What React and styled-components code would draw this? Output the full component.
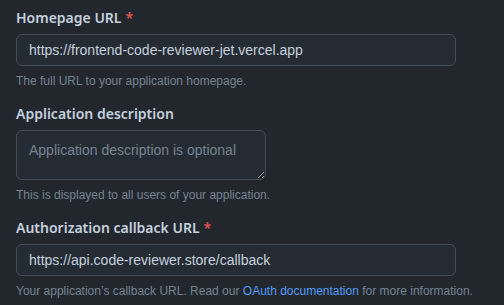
import React from 'react';
import styled, { createGlobalStyle } from 'styled-components';

const GlobalStyle = createGlobalStyle`
  html, body {
    margin: 0;
    padding: 0;
    background: #22272e;
  }
  body {
    font-family: "Liberation Sans", "Noto Sans", sans-serif;
    color: #adbac7;
  }
`;

const Page = styled.div`
  width: 504px;
  height: 305px;
  overflow: hidden;
  padding: 8px 16px 0;
  box-sizing: border-box;
  display: flex;
  flex-direction: column;
  gap: 14px;
`;

const Field = styled.div`
  display: flex;
  flex-direction: column;
`;

const Label = styled.label`
  font-family: "Noto Sans", sans-serif;
  font-size: 14px;
  font-weight: 600;
  line-height: 20px;
  color: #c5d1de;
  margin-bottom: 6px;
`;

const Required = styled.span`
  color: #e5534b;
  margin-left: 4px;
`;

const TextInput = styled.input`
  box-sizing: border-box;
  width: ${(p) => p.$width}px;
  height: 32px;
  padding: 5px 12px;
  font-family: inherit;
  font-size: 14px;
  line-height: 20px;
  color: #c5d1de;
  background: #252b33;
  border: 1px solid #444c56;
  border-radius: 6px;
  outline: none;
`;

const TextArea = styled.textarea`
  box-sizing: border-box;
  width: 250px;
  height: 50px;
  padding: 9px 12px 5px;
  font-family: inherit;
  font-size: 14px;
  line-height: 20px;
  color: #c5d1de;
  background: #252b33;
  border: 1px solid #444c56;
  border-radius: 6px;
  outline: none;
  &::placeholder {
    color: #768390;
  }
`;

const Note = styled.p`
  margin: 6px 0 0;
  font-size: 12px;
  line-height: 18px;
  color: #768390;
  white-space: nowrap;
`;

const Link = styled.a`
  color: #539bf5;
  text-decoration: none;
`;

export default function App() {
  return (
    <>
      <GlobalStyle />
      <Page>
        <Field>
          <Label>
            Homepage URL<Required>*</Required>
          </Label>
          <TextInput $width={440} defaultValue="https://frontend-code-reviewer-jet.vercel.app" />
          <Note>The full URL to your application homepage.</Note>
        </Field>
        <Field>
          <Label>Application description</Label>
          <TextArea placeholder="Application description is optional" />
          <Note>This is displayed to all users of your application.</Note>
        </Field>
        <Field>
          <Label>
            Authorization callback URL<Required>*</Required>
          </Label>
          <TextInput $width={440} defaultValue="https://api.code-reviewer.store/callback" />
          <Note>
            Your application’s callback URL. Read our <Link href="#">OAuth documentation</Link> for more information.
          </Note>
        </Field>
      </Page>
    </>
  );
}
